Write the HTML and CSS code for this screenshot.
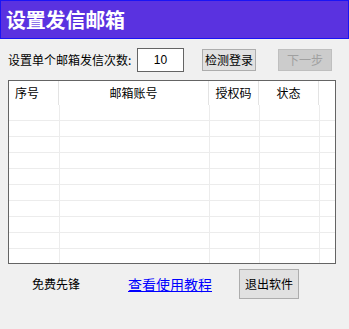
FILE: index.html
```html
<!DOCTYPE html>
<html lang="zh-CN">
<head>
<meta charset="utf-8">
<title>设置发信邮箱</title>
<link rel="stylesheet" href="styles.css">
</head>
<body>
<div class="app">
  <div class="titlebar">设置发信邮箱</div>
  <div class="toolbar">
    <span class="label">设置单个邮箱发信次数:</span>
    <div class="input">10</div>
    <button class="btn btn-check">检测登录</button>
    <button class="btn btn-next" disabled>下一步</button>
  </div>
  <div class="grid">
    <div class="head">
      <div class="hc c1 left">序号</div>
      <div class="hc c2">邮箱账号</div>
      <div class="hc c3">授权码</div>
      <div class="hc c4">状态</div>
      <div class="hc c5"></div>
    </div>
    <div class="body">
      <div class="row"><div class="dc d1"></div><div class="dc d2"></div><div class="dc d3"></div><div class="dc d4"></div><div class="dc d5"></div></div>
      <div class="row"><div class="dc d1"></div><div class="dc d2"></div><div class="dc d3"></div><div class="dc d4"></div><div class="dc d5"></div></div>
      <div class="row"><div class="dc d1"></div><div class="dc d2"></div><div class="dc d3"></div><div class="dc d4"></div><div class="dc d5"></div></div>
      <div class="row"><div class="dc d1"></div><div class="dc d2"></div><div class="dc d3"></div><div class="dc d4"></div><div class="dc d5"></div></div>
      <div class="row"><div class="dc d1"></div><div class="dc d2"></div><div class="dc d3"></div><div class="dc d4"></div><div class="dc d5"></div></div>
      <div class="row"><div class="dc d1"></div><div class="dc d2"></div><div class="dc d3"></div><div class="dc d4"></div><div class="dc d5"></div></div>
      <div class="row"><div class="dc d1"></div><div class="dc d2"></div><div class="dc d3"></div><div class="dc d4"></div><div class="dc d5"></div></div>
      <div class="row"><div class="dc d1"></div><div class="dc d2"></div><div class="dc d3"></div><div class="dc d4"></div><div class="dc d5"></div></div>
      <div class="row"><div class="dc d1"></div><div class="dc d2"></div><div class="dc d3"></div><div class="dc d4"></div><div class="dc d5"></div></div>
      <div class="row last"><div class="dc d1"></div><div class="dc d2"></div><div class="dc d3"></div><div class="dc d4"></div><div class="dc d5"></div></div>
    </div>
  </div>
  <div class="footer">
    <span class="free">免费先锋</span>
    <a class="link" href="#">查看使用教程</a>
    <button class="btn btn-exit">退出软件</button>
  </div>
</div>
</body>
</html>
```

FILE: styles.css
```css
html, body {
  margin: 0;
  padding: 0;
  background: #f0f0f0;
}
body {
  font-family: "Noto Sans CJK SC", "Liberation Sans", sans-serif;
  font-size: 12px;
  color: #000;
}
.app {
  width: 349px;
  height: 329px;
  overflow: hidden;
}
.titlebar {
  box-sizing: border-box;
  height: 39px;
  background: #5a32e0;
  border: 1px solid #1a14f5;
  color: #fff;
  font-size: 20px;
  font-weight: bold;
  line-height: 20px;
  padding: 9px 0 0 5px;
  letter-spacing: -0.2px;
}
.toolbar {
  display: flex;
  align-items: center;
  height: 24px;
  margin-top: 9px;
  padding-left: 8px;
}
.label {
  width: 129px;
  line-height: 14px;
  white-space: nowrap;
}
.input {
  box-sizing: border-box;
  width: 47px;
  height: 24px;
  background: #fff;
  border: 1px solid #646464;
  text-align: center;
  line-height: 22px;
  font-family: "Liberation Sans", sans-serif;
  font-size: 12px;
}
.btn {
  box-sizing: border-box;
  margin: 0;
  padding: 0;
  font-family: "Noto Sans CJK SC", "Liberation Sans", sans-serif;
  font-size: 12px;
  line-height: 14px;
  background: #e1e1e1;
  border: 1px solid #adadad;
  color: #000;
  border-radius: 0;
}
.btn-check {
  width: 54px;
  height: 22px;
  margin-left: 18px;
}
.btn-next {
  width: 54px;
  height: 22px;
  margin-left: 22px;
  background: #cccccc;
  border-color: #bfbfbf;
  color: #a0a0a0;
}
.grid {
  box-sizing: border-box;
  width: 328px;
  height: 184px;
  margin: 8px 0 0 8px;
  border: 1px solid #646464;
  background: #fff;
  overflow: hidden;
}
.head {
  display: flex;
  height: 24px;
}
.hc {
  box-sizing: border-box;
  height: 24px;
  border-right: 1px solid #e3e3e3;
  line-height: 24px;
  text-align: center;
}
.hc.left {
  text-align: left;
  padding-left: 6px;
}
.c1 { width: 50px; }
.c2 { width: 150px; }
.c3 { width: 50px; }
.c4 { width: 60px; }
.c5 { flex: 1; border-right: none; }
.row {
  display: flex;
  height: 16px;
  box-sizing: border-box;
  border-bottom: 1px solid #ececec;
}
.row.last {
  border-bottom: none;
}
.dc {
  box-sizing: border-box;
  height: 100%;
  border-right: 1px solid #ececec;
}
.d1 { width: 51px; }
.d2 { width: 150px; }
.d3 { width: 50px; }
.d4 { width: 60px; }
.d5 { flex: 1; border-right: none; }
.footer {
  display: flex;
  align-items: center;
  height: 30px;
  margin-top: 5px;
  padding-left: 32px;
}
.free {
  width: 48px;
  line-height: 14px;
}
.link {
  margin-left: 48px;
  color: #0000ff;
  font-size: 14px;
  line-height: 16px;
  text-decoration: underline;
  white-space: nowrap;
}
.btn-exit {
  width: 60px;
  height: 30px;
  margin-left: 27px;
}
```
